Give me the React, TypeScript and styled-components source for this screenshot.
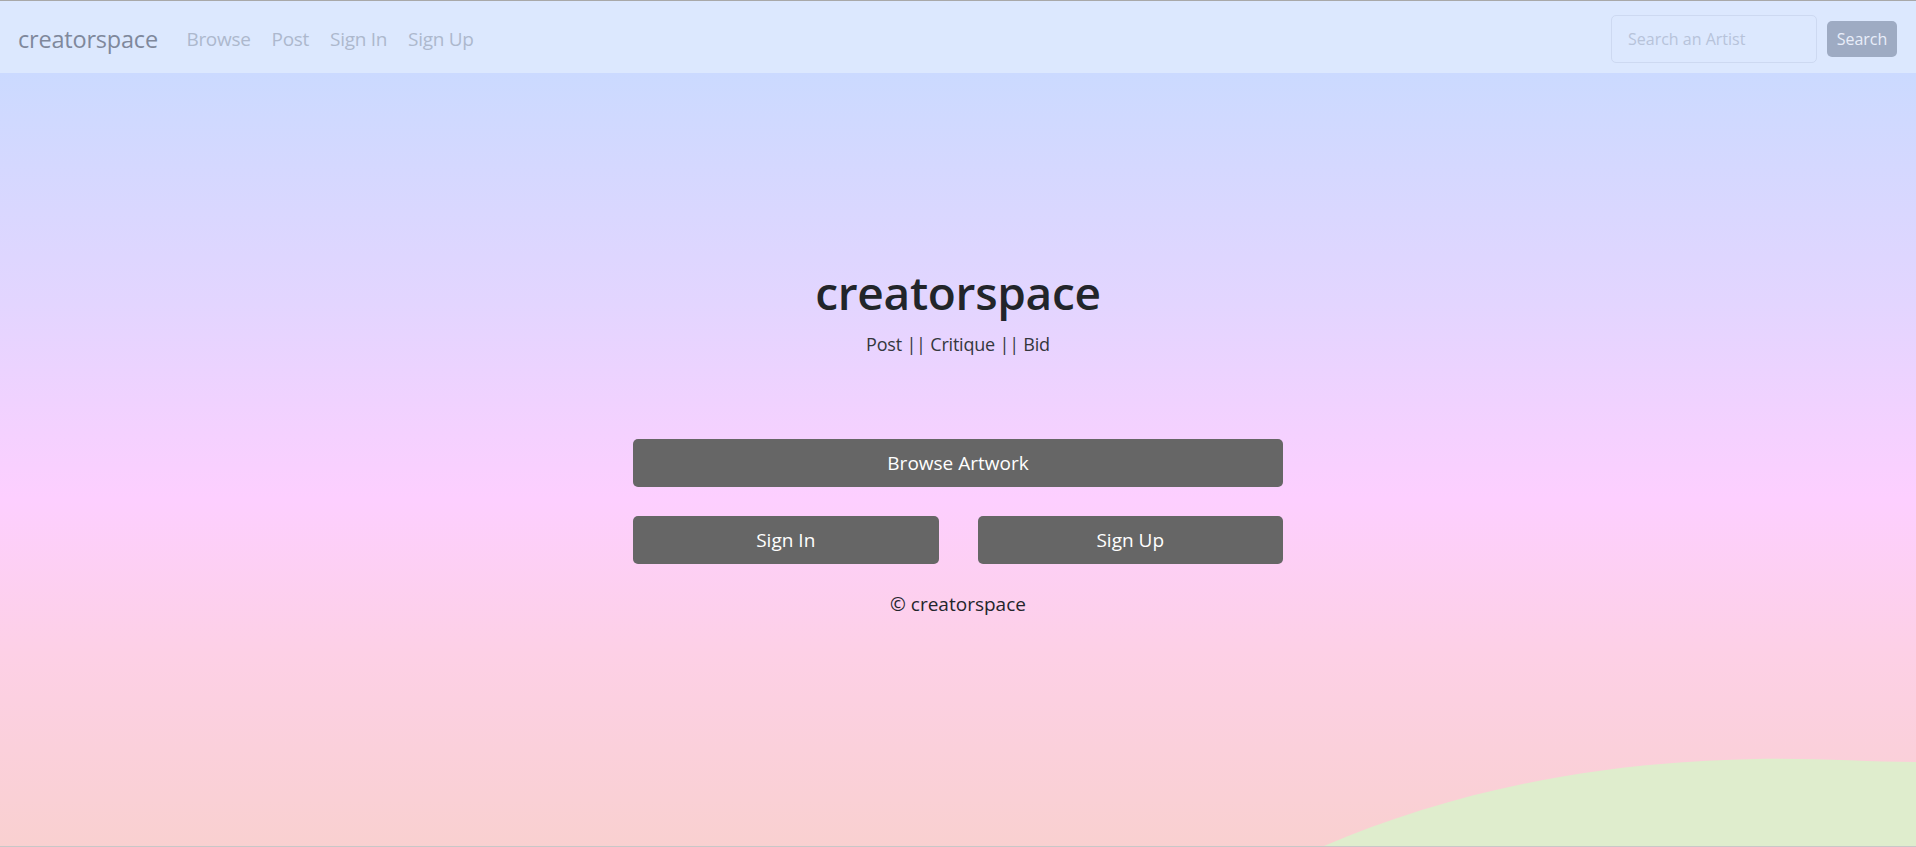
import React from "react";
import styled, { createGlobalStyle } from "styled-components";

const GlobalStyle = createGlobalStyle`
  html, body {
    margin: 0;
    padding: 0;
  }
  body {
    font-family: "Open Sans", "Noto Sans", Arial, sans-serif;
    color: #212529;
  }
  * {
    box-sizing: border-box;
  }
`;

const Page = styled.div`
  position: relative;
  height: 847px;
  overflow: hidden;
  display: flex;
  flex-direction: column;
  border-top: 1px solid #a8a8a8;
  border-bottom: 1px solid #c8c8c8;
`;

const NavBar = styled.nav`
  height: 72px;
  flex: 0 0 auto;
  display: flex;
  align-items: center;
  padding: 4px 19px 0 18px;
  background: #dce8fe;
`;

const Brand = styled.a`
  font-size: 23.5px;
  color: #7f889c;
  text-decoration: none;
  margin-right: 18px;
  letter-spacing: -0.2px;
`;

const NavLinks = styled.ul`
  display: flex;
  list-style: none;
  margin: 0;
  padding: 0;
  flex: 1;
`;

const NavLink = styled.li`
  font-size: 19px;
  color: #adb8cd;
  padding: 0 10.5px;
  letter-spacing: -0.3px;
`;

const SearchForm = styled.form`
  display: flex;
  align-items: center;
  gap: 10px;
`;

const SearchInput = styled.input`
  width: 206px;
  height: 48px;
  border: 1px solid #cdd9f1;
  border-radius: 5px;
  background: transparent;
  padding: 0 16px;
  font-family: inherit;
  font-size: 16px;
  outline: none;

  &::placeholder {
    color: #b7c3da;
  }
`;

const SearchButton = styled.button`
  width: 70px;
  height: 36px;
  border: none;
  border-radius: 5px;
  background: #9eabc3;
  color: #e9eefa;
  font-family: inherit;
  font-size: 16px;
  padding: 0;
`;

const Hero = styled.main`
  flex: 1;
  display: flex;
  flex-direction: column;
  align-items: center;
  padding-top: 189px;
  background: linear-gradient(
    180deg,
    #cbdaff 0%,
    #e3d5ff 30%,
    #fdcfff 55%,
    #fdd0e6 75%,
    #f9d0d0 100%
  );
`;

const Title = styled.h1`
  margin: 0;
  font-size: 46px;
  font-weight: 600;
  line-height: 60px;
  color: #22252a;
  letter-spacing: -0.3px;
`;

const Tagline = styled.p`
  margin: 10px 0 0;
  font-size: 18px;
  line-height: 24px;
  color: #34373d;
  letter-spacing: -0.2px;
`;

const Actions = styled.div`
  width: 650px;
  margin-top: 83px;
  display: flex;
  flex-direction: column;
  gap: 29px;
`;

const ButtonRow = styled.div`
  display: grid;
  grid-template-columns: 1fr 1fr;
  gap: 39px;
`;

const ActionButton = styled.button`
  height: 48px;
  width: 100%;
  border: none;
  border-radius: 5px;
  background: #666666;
  color: #ffffff;
  font-family: inherit;
  font-size: 19px;
  padding: 0;
`;

const Copyright = styled.p`
  margin: 28px 0 0;
  font-size: 19px;
  line-height: 24px;
  color: #23252b;
`;

const Wave = styled.svg`
  position: absolute;
  right: 0;
  bottom: 0;
  width: 600px;
  height: 92px;
`;

export default function App() {
  return (
    <>
      <GlobalStyle />
      <Page>
        <NavBar>
          <Brand href="#">creatorspace</Brand>
          <NavLinks>
            <NavLink>Browse</NavLink>
            <NavLink>Post</NavLink>
            <NavLink>Sign In</NavLink>
            <NavLink>Sign Up</NavLink>
          </NavLinks>
          <SearchForm onSubmit={(e) => e.preventDefault()}>
            <SearchInput placeholder="Search an Artist" />
            <SearchButton type="submit">Search</SearchButton>
          </SearchForm>
        </NavBar>
        <Hero>
          <Title>creatorspace</Title>
          <Tagline>Post || Critique || Bid</Tagline>
          <Actions>
            <ActionButton>Browse Artwork</ActionButton>
            <ButtonRow>
              <ActionButton>Sign In</ActionButton>
              <ActionButton>Sign Up</ActionButton>
            </ButtonRow>
          </Actions>
          <Copyright>© creatorspace</Copyright>
        </Hero>
        <Wave viewBox="0 0 600 92" preserveAspectRatio="none">
          <path
            d="M8 92 C 130 40, 270 8, 440 5 C 500 4, 550 8, 600 8 L 600 92 Z"
            fill="#dfedcd"
          />
        </Wave>
      </Page>
    </>
  );
}
